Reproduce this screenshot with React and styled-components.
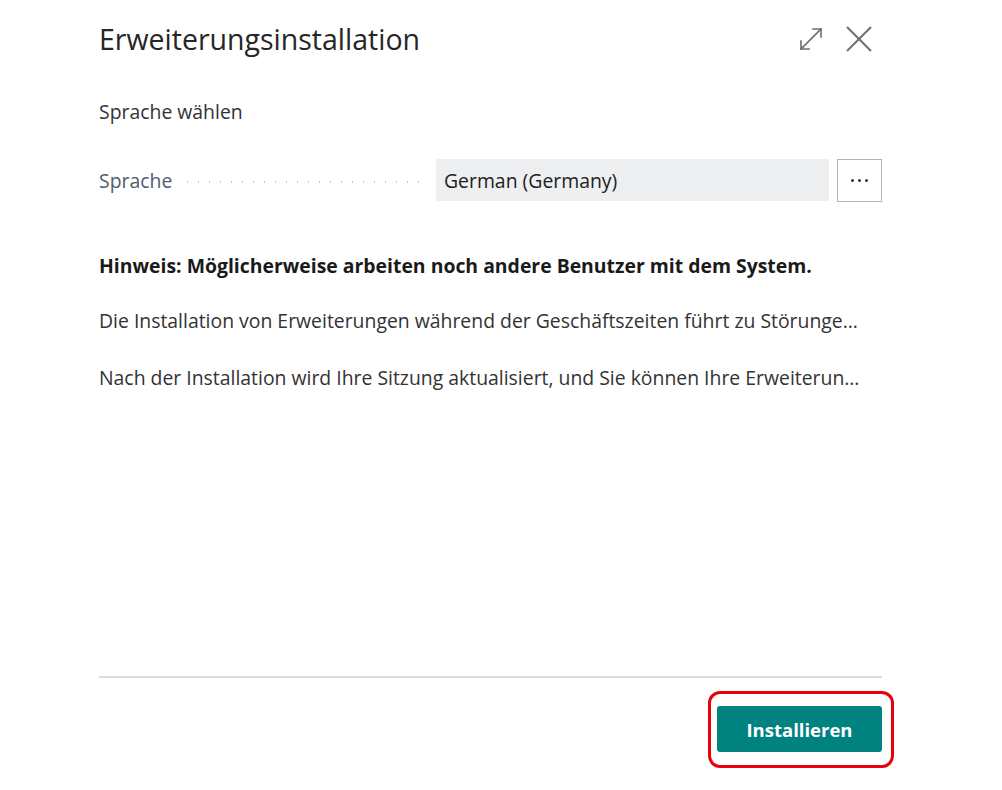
import React from "react";
import styled, { createGlobalStyle } from "styled-components";

const Global = createGlobalStyle`
body {
  margin: 0;
  background: #fff;
  font-family: "Open Sans", "Noto Sans", sans-serif;
  color: #212121;
}`

const Dialog = styled.div`
width: 783px;
height: 790px;
margin-left: 99px;
display: flex;
flex-direction: column;
`

const Head = styled.div`
display: flex;
align-items: center;
justify-content: space-between;
height: 78px;
`

const Title = styled.div`
font-size: 28.5px;
font-weight: 500;
color: #262626;
`

const Tools = styled.div`
display: flex;
align-items: center;
gap: 20px;
margin-right: 9px;
`

const IconButton = styled.div`
display: flex;
align-items: center;
justify-content: center;
width: 28px;
height: 28px;
cursor: pointer;
`

const Caption = styled.div`
font-size: 19.4px;
line-height: 26px;
color: #333;
margin-top: 21px;
`

const FieldRow = styled.div`
display: flex;
align-items: center;
margin-top: 34px;
height: 42px;
`

const FieldLabel = styled.div`
font-size: 19.4px;
color: #505c6d;
white-space: nowrap;
`

const Leader = styled.div`
flex: 1;
height: 2px;
margin: 4px 10px 0 10px;
background-image: radial-gradient(circle, #c8c8c8 0.9px, transparent 1.1px);
background-size: 11px 2px;
background-repeat: repeat-x;
`

const Input = styled.div`
width: 393px;
height: 42px;
box-sizing: border-box;
background: #edeff0;
padding: 0 8px;
display: flex;
align-items: center;
font-size: 19.4px;
color: #212121;
`

const MoreButton = styled.div`
width: 45px;
height: 43px;
box-sizing: border-box;
margin-left: 8px;
border: 1px solid #b3b3b3;
display: flex;
align-items: center;
justify-content: center;
gap: 4px;
`

const Dot = styled.span`
width: 3px;
height: 3px;
border-radius: 50%;
background: #333;
`

const Note = styled.div`
font-size: 19.4px;
line-height: 26px;
font-weight: ${p => (p.bold ? 700 : 400)};
color: ${p => (p.bold ? "#1a1a1a" : "#333")};
margin-top: ${p => p.top}px;
width: 770px;
white-space: nowrap;
overflow: hidden;
text-overflow: ellipsis;
`

const Spacer = styled.div`
flex: 1;
`

const Divider = styled.div`
height: 2px;
background: #dcdcdc;
`

const Footer = styled.div`
display: flex;
justify-content: flex-end;
padding-top: 13px;
height: 99px;
`

const Highlight = styled.div`
margin-right: -12px;
padding: 12px 9px 13px 6px;
border: 3px solid #e8000b;
border-radius: 12px;
align-self: flex-start;
`

const PrimaryButton = styled.div`
width: 165px;
height: 46px;
border-radius: 3px;
background: #00827f;
color: #fff;
font-size: 18.5px;
font-weight: 700;
display: flex;
align-items: center;
justify-content: center;
cursor: pointer;
`

function ExpandIcon() {
  return (
    <svg width="26" height="26" viewBox="0 0 26 26" fill="none" stroke="#6e6e6e" strokeWidth="1.6" strokeLinecap="square">
      <path d="M3 23 L23 3" />
      <path d="M15 3 H23 V11" />
      <path d="M3 15 V23 H11" />
    </svg>
  );
}

function CloseIcon() {
  return (
    <svg width="28" height="28" viewBox="0 0 28 28" fill="none" stroke="#6e6e6e" strokeWidth="2">
      <path d="M2 2 L26 26" />
      <path d="M26 2 L2 26" />
    </svg>
  );
}

export default function App() {
  return (
    <>
      <Global />
      <Dialog>
        <Head>
          <Title>Erweiterungsinstallation</Title>
          <Tools>
            <IconButton><ExpandIcon /></IconButton>
            <IconButton><CloseIcon /></IconButton>
          </Tools>
        </Head>
        <Caption>Sprache wählen</Caption>
        <FieldRow>
          <FieldLabel>Sprache</FieldLabel>
          <Leader />
          <Input>German (Germany)</Input>
          <MoreButton><Dot /><Dot /><Dot /></MoreButton>
        </FieldRow>
        <Note bold top={52}>Hinweis: Möglicherweise arbeiten noch andere Benutzer mit dem System.</Note>
        <Note top={29}>Die Installation von Erweiterungen während der Geschäftszeiten führt zu Störungen bei anderen Benutzern.</Note>
        <Note top={31}>Nach der Installation wird Ihre Sitzung aktualisiert, und Sie können Ihre Erweiterung einrichten.</Note>
        <Spacer />
        <Divider />
        <Footer>
          <Highlight>
            <PrimaryButton>Installieren</PrimaryButton>
          </Highlight>
        </Footer>
      </Dialog>
    </>
  );
}
